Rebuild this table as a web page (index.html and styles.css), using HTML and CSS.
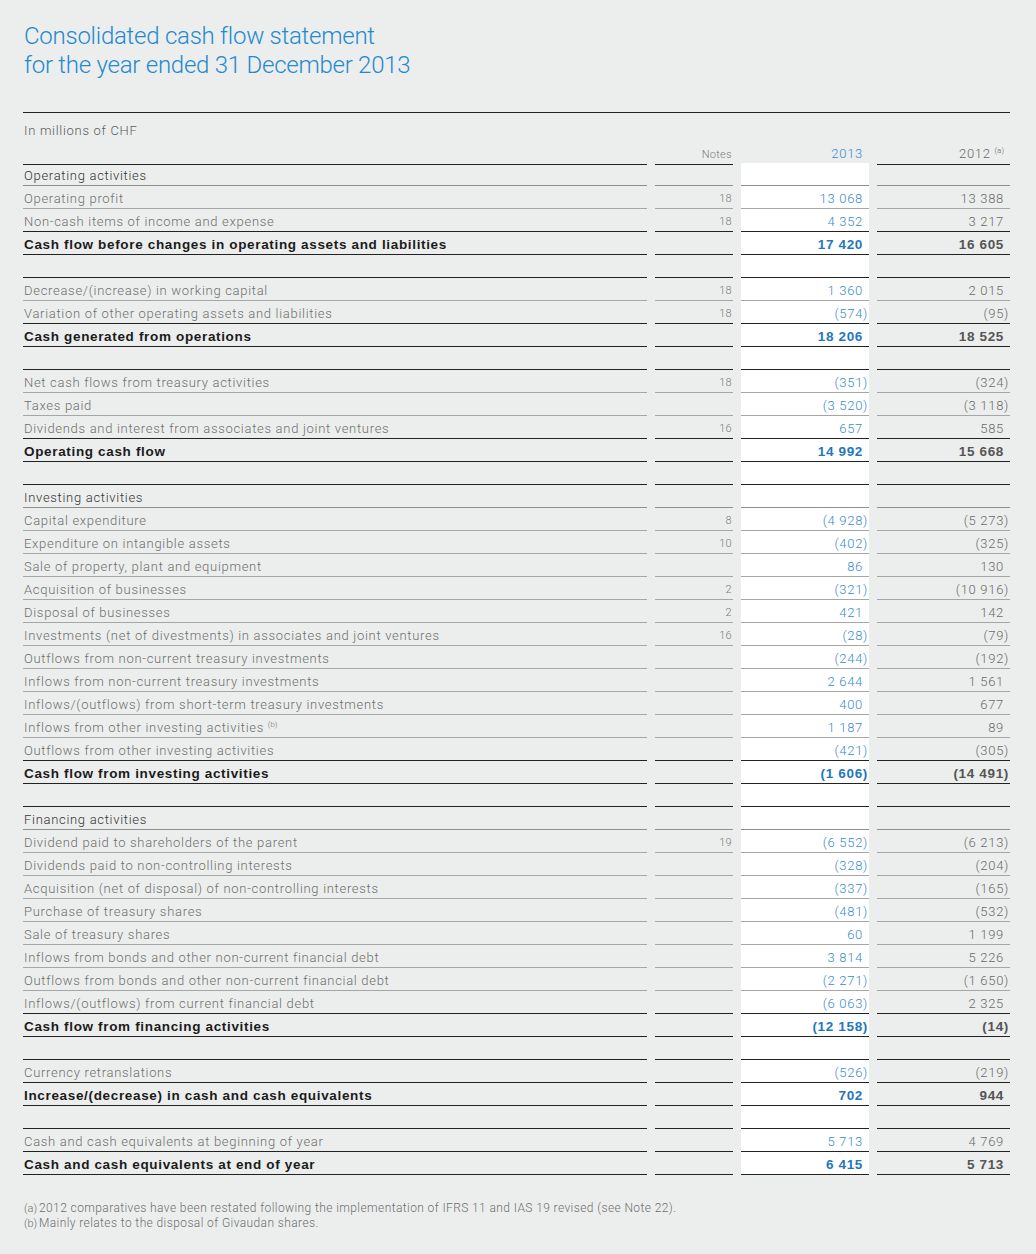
FILE: index.html
```html
<!DOCTYPE html>
<html lang="en">

<head>
    <meta charset="UTF-8">
    <meta name="viewport" content="width=device-width, initial-scale=1.0">
    <title>Consolidated cash flow statement</title>
    <link rel="stylesheet" href="styles.css">
</head>

<body>
    <div class="page">
        <h1 class="title">Consolidated cash flow statement<br>for the year ended 31 December 2013</h1>

        <div class="statement">
            <div class="unit">In millions of CHF</div>

            <div class="row head">
                <div class="cell label"></div>
                <div class="cell note">Notes</div>
                <div class="cell cur">2013</div>
                <div class="cell prev">2012 <sup>(a)</sup></div>
            </div>

            <!-- operating -->
            <div class="row sec">
                <div class="cell label">Operating activities</div>
                <div class="cell note"></div>
                <div class="cell cur"></div>
                <div class="cell prev"></div>
            </div>
            <div class="row">
                <div class="cell label">Operating profit</div>
                <div class="cell note">18</div>
                <div class="cell cur">13 068</div>
                <div class="cell prev">13 388</div>
            </div>
            <div class="row pre">
                <div class="cell label">Non-cash items of income and expense</div>
                <div class="cell note">18</div>
                <div class="cell cur">4 352</div>
                <div class="cell prev">3 217</div>
            </div>
            <div class="row total">
                <div class="cell label">Cash flow before changes in operating assets and liabilities</div>
                <div class="cell note"></div>
                <div class="cell cur">17 420</div>
                <div class="cell prev">16 605</div>
            </div>
            <div class="row gap">
                <div class="cell label"></div>
                <div class="cell note"></div>
                <div class="cell cur"></div>
                <div class="cell prev"></div>
            </div>

            <div class="row">
                <div class="cell label">Decrease/(increase) in working capital</div>
                <div class="cell note">18</div>
                <div class="cell cur">1 360</div>
                <div class="cell prev">2 015</div>
            </div>
            <div class="row pre">
                <div class="cell label">Variation of other operating assets and liabilities</div>
                <div class="cell note">18</div>
                <div class="cell cur"><span class="neg">(574)</span></div>
                <div class="cell prev"><span class="neg">(95)</span></div>
            </div>
            <div class="row total">
                <div class="cell label">Cash generated from operations</div>
                <div class="cell note"></div>
                <div class="cell cur">18 206</div>
                <div class="cell prev">18 525</div>
            </div>
            <div class="row gap">
                <div class="cell label"></div>
                <div class="cell note"></div>
                <div class="cell cur"></div>
                <div class="cell prev"></div>
            </div>

            <div class="row">
                <div class="cell label">Net cash flows from treasury activities</div>
                <div class="cell note">18</div>
                <div class="cell cur"><span class="neg">(351)</span></div>
                <div class="cell prev"><span class="neg">(324)</span></div>
            </div>
            <div class="row">
                <div class="cell label">Taxes paid</div>
                <div class="cell note"></div>
                <div class="cell cur"><span class="neg">(3 520)</span></div>
                <div class="cell prev"><span class="neg">(3 118)</span></div>
            </div>
            <div class="row pre">
                <div class="cell label">Dividends and interest from associates and joint ventures</div>
                <div class="cell note">16</div>
                <div class="cell cur">657</div>
                <div class="cell prev">585</div>
            </div>
            <div class="row total">
                <div class="cell label">Operating cash flow</div>
                <div class="cell note"></div>
                <div class="cell cur">14 992</div>
                <div class="cell prev">15 668</div>
            </div>
            <div class="row gap">
                <div class="cell label"></div>
                <div class="cell note"></div>
                <div class="cell cur"></div>
                <div class="cell prev"></div>
            </div>

            <!-- investing -->
            <div class="row sec">
                <div class="cell label">Investing activities</div>
                <div class="cell note"></div>
                <div class="cell cur"></div>
                <div class="cell prev"></div>
            </div>
            <div class="row">
                <div class="cell label">Capital expenditure</div>
                <div class="cell note">8</div>
                <div class="cell cur"><span class="neg">(4 928)</span></div>
                <div class="cell prev"><span class="neg">(5 273)</span></div>
            </div>
            <div class="row">
                <div class="cell label">Expenditure on intangible assets</div>
                <div class="cell note">10</div>
                <div class="cell cur"><span class="neg">(402)</span></div>
                <div class="cell prev"><span class="neg">(325)</span></div>
            </div>
            <div class="row">
                <div class="cell label">Sale of property, plant and equipment</div>
                <div class="cell note"></div>
                <div class="cell cur">86</div>
                <div class="cell prev">130</div>
            </div>
            <div class="row">
                <div class="cell label">Acquisition of businesses</div>
                <div class="cell note">2</div>
                <div class="cell cur"><span class="neg">(321)</span></div>
                <div class="cell prev"><span class="neg">(10 916)</span></div>
            </div>
            <div class="row">
                <div class="cell label">Disposal of businesses</div>
                <div class="cell note">2</div>
                <div class="cell cur">421</div>
                <div class="cell prev">142</div>
            </div>
            <div class="row">
                <div class="cell label">Investments (net of divestments) in associates and joint ventures</div>
                <div class="cell note">16</div>
                <div class="cell cur"><span class="neg">(28)</span></div>
                <div class="cell prev"><span class="neg">(79)</span></div>
            </div>
            <div class="row">
                <div class="cell label">Outflows from non-current treasury investments</div>
                <div class="cell note"></div>
                <div class="cell cur"><span class="neg">(244)</span></div>
                <div class="cell prev"><span class="neg">(192)</span></div>
            </div>
            <div class="row">
                <div class="cell label">Inflows from non-current treasury investments</div>
                <div class="cell note"></div>
                <div class="cell cur">2 644</div>
                <div class="cell prev">1 561</div>
            </div>
            <div class="row">
                <div class="cell label">Inflows/(outflows) from short-term treasury investments</div>
                <div class="cell note"></div>
                <div class="cell cur">400</div>
                <div class="cell prev">677</div>
            </div>
            <div class="row">
                <div class="cell label">Inflows from other investing activities <sup>(b)</sup></div>
                <div class="cell note"></div>
                <div class="cell cur">1 187</div>
                <div class="cell prev">89</div>
            </div>
            <div class="row pre">
                <div class="cell label">Outflows from other investing activities</div>
                <div class="cell note"></div>
                <div class="cell cur"><span class="neg">(421)</span></div>
                <div class="cell prev"><span class="neg">(305)</span></div>
            </div>
            <div class="row total">
                <div class="cell label">Cash flow from investing activities</div>
                <div class="cell note"></div>
                <div class="cell cur"><span class="neg">(1 606)</span></div>
                <div class="cell prev"><span class="neg">(14 491)</span></div>
            </div>
            <div class="row gap">
                <div class="cell label"></div>
                <div class="cell note"></div>
                <div class="cell cur"></div>
                <div class="cell prev"></div>
            </div>

            <!-- financing -->
            <div class="row sec">
                <div class="cell label">Financing activities</div>
                <div class="cell note"></div>
                <div class="cell cur"></div>
                <div class="cell prev"></div>
            </div>
            <div class="row">
                <div class="cell label">Dividend paid to shareholders of the parent</div>
                <div class="cell note">19</div>
                <div class="cell cur"><span class="neg">(6 552)</span></div>
                <div class="cell prev"><span class="neg">(6 213)</span></div>
            </div>
            <div class="row">
                <div class="cell label">Dividends paid to non-controlling interests</div>
                <div class="cell note"></div>
                <div class="cell cur"><span class="neg">(328)</span></div>
                <div class="cell prev"><span class="neg">(204)</span></div>
            </div>
            <div class="row">
                <div class="cell label">Acquisition (net of disposal) of non-controlling interests</div>
                <div class="cell note"></div>
                <div class="cell cur"><span class="neg">(337)</span></div>
                <div class="cell prev"><span class="neg">(165)</span></div>
            </div>
            <div class="row">
                <div class="cell label">Purchase of treasury shares</div>
                <div class="cell note"></div>
                <div class="cell cur"><span class="neg">(481)</span></div>
                <div class="cell prev"><span class="neg">(532)</span></div>
            </div>
            <div class="row">
                <div class="cell label">Sale of treasury shares</div>
                <div class="cell note"></div>
                <div class="cell cur">60</div>
                <div class="cell prev">1 199</div>
            </div>
            <div class="row">
                <div class="cell label">Inflows from bonds and other non-current financial debt</div>
                <div class="cell note"></div>
                <div class="cell cur">3 814</div>
                <div class="cell prev">5 226</div>
            </div>
            <div class="row">
                <div class="cell label">Outflows from bonds and other non-current financial debt</div>
                <div class="cell note"></div>
                <div class="cell cur"><span class="neg">(2 271)</span></div>
                <div class="cell prev"><span class="neg">(1 650)</span></div>
            </div>
            <div class="row pre">
                <div class="cell label">Inflows/(outflows) from current financial debt</div>
                <div class="cell note"></div>
                <div class="cell cur"><span class="neg">(6 063)</span></div>
                <div class="cell prev">2 325</div>
            </div>
            <div class="row total">
                <div class="cell label">Cash flow from financing activities</div>
                <div class="cell note"></div>
                <div class="cell cur"><span class="neg">(12 158)</span></div>
                <div class="cell prev"><span class="neg">(14)</span></div>
            </div>
            <div class="row gap">
                <div class="cell label"></div>
                <div class="cell note"></div>
                <div class="cell cur"></div>
                <div class="cell prev"></div>
            </div>

            <!-- totals -->
            <div class="row pre">
                <div class="cell label">Currency retranslations</div>
                <div class="cell note"></div>
                <div class="cell cur"><span class="neg">(526)</span></div>
                <div class="cell prev"><span class="neg">(219)</span></div>
            </div>
            <div class="row total">
                <div class="cell label">Increase/(decrease) in cash and cash equivalents</div>
                <div class="cell note"></div>
                <div class="cell cur">702</div>
                <div class="cell prev">944</div>
            </div>
            <div class="row gap">
                <div class="cell label"></div>
                <div class="cell note"></div>
                <div class="cell cur"></div>
                <div class="cell prev"></div>
            </div>

            <div class="row pre">
                <div class="cell label">Cash and cash equivalents at beginning of year</div>
                <div class="cell note"></div>
                <div class="cell cur">5 713</div>
                <div class="cell prev">4 769</div>
            </div>
            <div class="row total">
                <div class="cell label">Cash and cash equivalents at end of year</div>
                <div class="cell note"></div>
                <div class="cell cur">6 415</div>
                <div class="cell prev">5 713</div>
            </div>
        </div>

        <div class="footnotes">
            <p><span class="mark">(a)</span>2012 comparatives have been restated following the implementation of IFRS 11 and IAS 19 revised (see Note 22).</p>
            <p><span class="mark">(b)</span>Mainly relates to the disposal of Givaudan shares.</p>
        </div>
    </div>
</body>

</html>
```

FILE: styles.css
```css
* {
    margin: 0;
    padding: 0;
    box-sizing: border-box;
}

body {
    font-family: 'Roboto', 'Liberation Sans', sans-serif;
    font-weight: 300;
    background-color: #eceeed;
    color: #6e6e6e;
}

.page {
    width: 1036px;
    min-height: 1254px;
    padding: 22px 26px 0 23px;
}

.title {
    font-size: 24px;
    line-height: 29px;
    font-weight: 300;
    letter-spacing: -0.25px;
    color: #2489cf;
    padding-left: 1px;
}

.statement {
    margin-top: 32px;
    border-top: 1px solid #222;
}

.unit {
    font-size: 13px;
    letter-spacing: 0.7px;
    line-height: 20px;
    padding: 8px 0 0 1px;
    height: 27px;
    color: #5c5c5c;
}

.row {
    display: grid;
    grid-template-columns: 624px 78px 128px 133px;
    column-gap: 8px;
    height: 23px;
}

.cell {
    border-bottom: 1px solid #a6a6a6;
    font-size: 13px;
    letter-spacing: 0.7px;
    line-height: 18px;
    padding-top: 4px;
    white-space: nowrap;
}

.label {
    padding-left: 1px;
}

.note {
    text-align: right;
    font-size: 11px;
    letter-spacing: 0.3px;
    color: #7a7a7a;
    padding-right: 1px;
}

.cur {
    text-align: right;
    padding-right: 6px;
    background-color: #fff;
    color: #3b8bcd;
}

.prev {
    text-align: right;
    padding-right: 6px;
    color: #6a6a6a;
}

.neg {
    margin-right: -5px;
}

sup {
    font-size: 8px;
    letter-spacing: 0;
    vertical-align: 5px;
    line-height: 0;
}

/* header row */
.row.head .cell {
    border-bottom-color: #222;
    padding-top: 5px;
}

.row.head .cur {
    background-color: transparent;
}

.row.head .note {
    padding-top: 6px;
}

/* section title like "Operating activities" */
.row.sec .cell {
    border-bottom-color: #8e8e8e;
}

.row.sec .label {
    color: #333;
}

.row.pre .cell,
.row.gap .cell,
.row.total .cell {
    border-bottom-color: #222;
}

.row.total .cell {
    font-family: 'Liberation Sans', sans-serif;
    font-weight: 700;
    font-size: 13.5px;
    letter-spacing: 0.66px;
}

.row.total .label {
    color: #1b1b1b;
}

.row.total .cur {
    color: #1f78bd;
}

.row.total .prev {
    color: #555;
}

.footnotes {
    margin-top: 26px;
    font-size: 12px;
    letter-spacing: 0.4px;
    line-height: 15px;
    color: #6f6f6f;
    padding-left: 1px;
}

.mark {
    display: inline-block;
    width: 15px;
    letter-spacing: 0;
    font-size: 11px;
}
```
